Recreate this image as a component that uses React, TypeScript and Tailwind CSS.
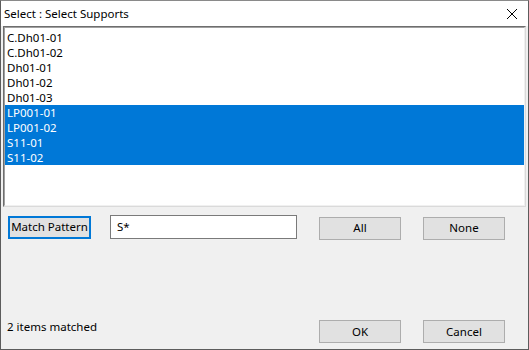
const items = [
  { label: 'C.Dh01-01', selected: false },
  { label: 'C.Dh01-02', selected: false },
  { label: 'Dh01-01', selected: false },
  { label: 'Dh01-02', selected: false },
  { label: 'Dh01-03', selected: false },
  { label: 'LP001-01', selected: true },
  { label: 'LP001-02', selected: true },
  { label: 'S11-01', selected: true },
  { label: 'S11-02', selected: true },
];

function Button({ label, focused = false }: { label: string; focused?: boolean }) {
  return (
    <button
      className={
        focused
          ? 'w-[83px] h-[23px] px-0 whitespace-nowrap bg-[#e1e1e1] border-2 border-[#0078d7] text-[11.5px] text-black leading-none'
          : 'w-[82px] h-[23px] px-0 whitespace-nowrap bg-[#e1e1e1] border border-[#adadad] text-[11.5px] text-black leading-none'
      }
    >
      {label}
    </button>
  );
}

export default function App() {
  return (
    <div
      className="w-[529px] h-[350px] flex flex-col bg-[#f0f0f0] border border-[#5c5c5c] border-t-[#8a8a8a] text-black"
      style={{ fontFamily: '"Noto Sans", "Open Sans", sans-serif' }}
    >
      {/* Title bar */}
      <div className="h-[25px] bg-white flex items-center justify-between pl-[3px] pr-[10px] shrink-0">
        <span className="text-[11.5px] leading-[15px]">Select : Select Supports</span>
        <svg width="12" height="12" viewBox="0 0 12 12">
          <path d="M1 1 L11 11 M11 1 L1 11" stroke="#000" strokeWidth="1" />
        </svg>
      </div>

      {/* List */}
      <div className="mx-[2px] h-[181px] shrink-0 border border-[#dadada] border-t-[#6e6e6e] border-l-[#6e6e6e] bg-white">
        <div className="h-full border border-[#a0a0a0] border-r-[#f0f0f0] border-b-[#f0f0f0] pt-[2px]">
          {items.map((item) => (
            <div
              key={item.label}
              className={
                item.selected
                  ? 'h-[15px] pl-[2px] text-[11.5px] leading-[15px] bg-[#0078d7] text-white whitespace-nowrap'
                  : 'h-[15px] pl-[2px] text-[11.5px] leading-[15px] text-black whitespace-nowrap'
              }
            >
              {item.label}
            </div>
          ))}
        </div>
      </div>

      {/* Pattern row */}
      <div className="flex items-center mt-[8px] pl-[7px] h-[24px]">
        <Button label="Match Pattern" focused />
        <div className="ml-[19px] w-[187px] h-[24px] bg-white border border-[#7a7a7a] flex items-center pl-[6px] text-[11.5px] leading-none">
          S*
        </div>
        <div className="ml-[22px]">
          <Button label="All" />
        </div>
        <div className="ml-[22px]">
          <Button label="None" />
        </div>
      </div>

      <div className="flex-1" />

      {/* Bottom row */}
      <div className="flex items-start pl-[6px] pb-[6px]">
        <span className="w-[312px] text-[11.5px] leading-[15px] -mt-[1px]">2 items matched</span>
        <div className="flex gap-[22px]">
          <Button label="OK" />
          <Button label="Cancel" />
        </div>
      </div>
    </div>
  );
}
